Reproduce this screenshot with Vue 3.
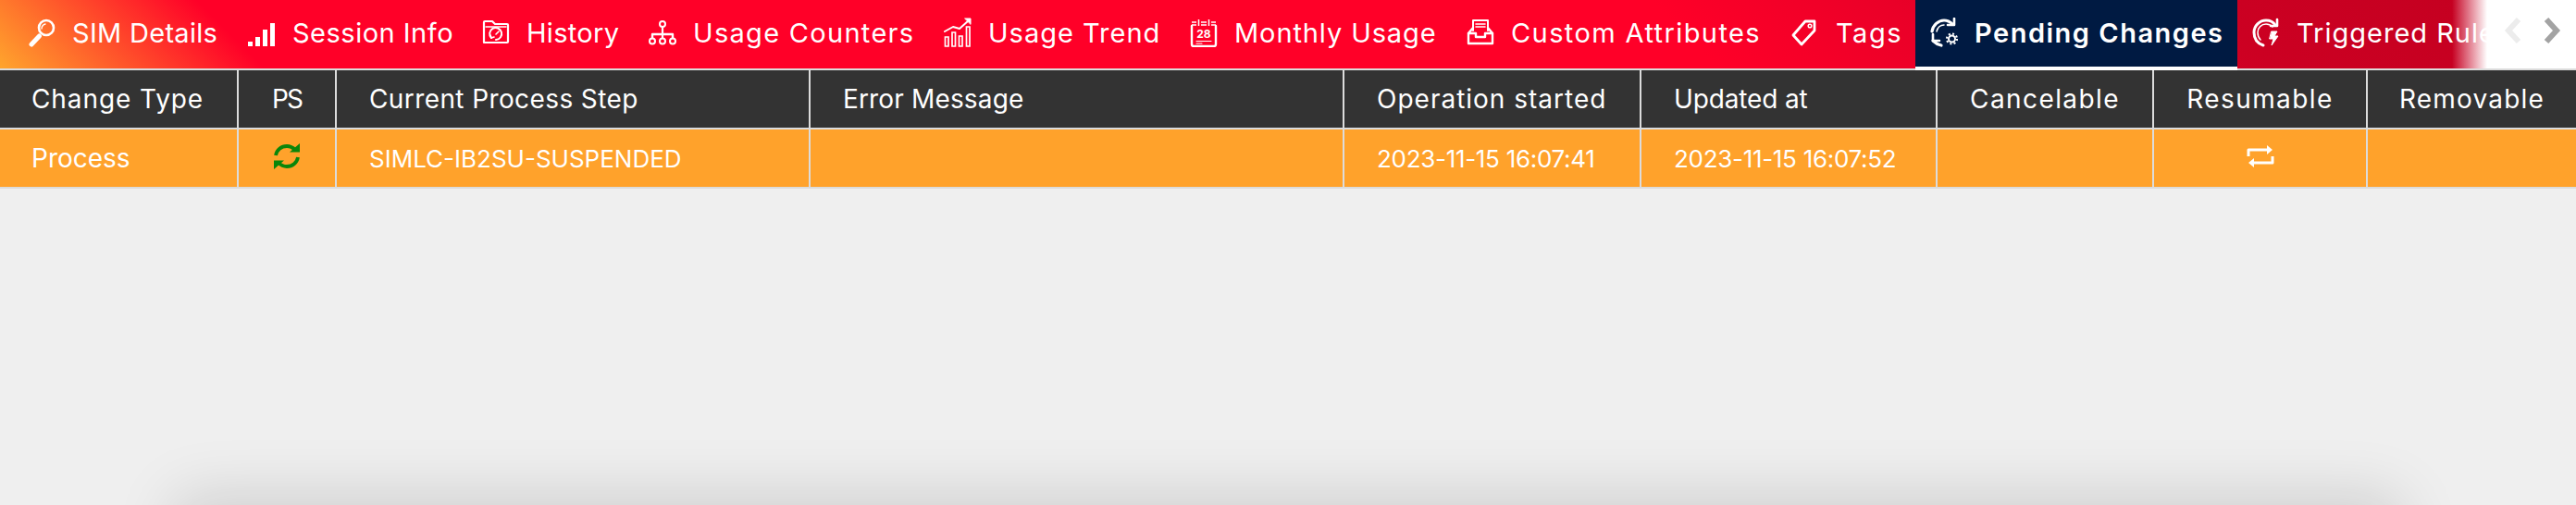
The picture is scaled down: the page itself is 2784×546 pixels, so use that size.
<script setup>
const tabs = [
  { label: 'SIM Details', icon: 'search', ls: 0.3 },
  { label: 'Session Info', icon: 'signal', ls: 0.5 },
  { label: 'History', icon: 'history', ls: 0.3 },
  { label: 'Usage Counters', icon: 'tree', ls: 1.3 },
  { label: 'Usage Trend', icon: 'trend', ls: 1 },
  { label: 'Monthly Usage', icon: 'calendar', ls: 0.9 },
  { label: 'Custom Attributes', icon: 'inbox', ls: 1.4 },
  { label: 'Tags', icon: 'tag', ls: 1.5 },
  { label: 'Pending Changes', icon: 'pending', active: true, ls: 1.5 },
  { label: 'Triggered Rules', icon: 'rules', ls: 1 }
]
const headers = [
  { label: 'Change Type', ls: 0.9 },
  { label: 'PS', ls: -2, center: true },
  { label: 'Current Process Step', ls: 0.4 },
  { label: 'Error Message', ls: 0.15 },
  { label: 'Operation started', ls: 1 },
  { label: 'Updated at', ls: -0.15 },
  { label: 'Cancelable', ls: 1.4, center: true },
  { label: 'Resumable', ls: 1.4, center: true },
  { label: 'Removable', ls: 1.2, center: true }
]
</script>

<template>
  <div class="page">
    <div class="tabbar">
      <nav class="tabs">
        <a v-for="t in tabs" :key="t.label" class="tab" :class="{ active: t.active }">
          <svg class="ico" viewBox="0 0 30 32" fill="none" stroke="#fff" stroke-width="2" stroke-linecap="round" stroke-linejoin="round">
            <template v-if="t.icon === 'search'">
              <circle cx="20" cy="11" r="8" stroke-width="2.6" />
              <path d="M15 12a5.500 5.500 0 0 1 4-5" stroke-width="1.4" />
              <path d="M12.500 20 4 29" stroke-width="5" />
            </template>
            <template v-else-if="t.icon === 'signal'">
              <g fill="#fff" stroke="none">
                <rect x="0" y="26" width="5" height="5" />
                <rect x="8" y="21" width="5" height="10" />
                <rect x="16" y="13" width="5" height="18" />
                <rect x="24" y="6" width="5" height="25" />
              </g>
            </template>
            <template v-else-if="t.icon === 'history'">
              <path d="M2 27V5a1 1 0 0 1 1-1h8l3 3h13a1 1 0 0 1 1 1v18a1 1 0 0 1-1 1z" stroke-width="2.2" />
              <path d="M4 10h22" stroke-width="1.4" />
              <path d="M10 22a6.500 6.500 0 1 1 5 2" stroke-width="2" />
              <path d="M15 18l3-3M9 19l1 3 3-1" stroke-width="1.6" />
            </template>
            <template v-else-if="t.icon === 'tree'">
              <circle cx="15" cy="7" r="3" />
              <path d="M15 10v12" stroke-width="2.2" />
              <path d="M4 22v-4h22v4" stroke-width="2.4" />
              <circle cx="4" cy="25.500" r="3" />
              <circle cx="15" cy="25.500" r="3" />
              <circle cx="26" cy="25.500" r="3" />
            </template>
            <template v-else-if="t.icon === 'trend'">
              <path d="M1 15 10 10l7 2L27 3" />
              <path d="M23 1h6v6z" fill="#fff" stroke-width="1" />
              <g stroke-width="1.7" stroke-linejoin="miter">
                <path d="M1.500 31V21h3.500v10z" />
                <path d="M9 31V16h3.500v15z" />
                <path d="M16.500 31V20H20v11z" />
                <path d="M24.500 31V10H28v21z" />
              </g>
            </template>
            <template v-else-if="t.icon === 'calendar'">
              <path d="M2 5h5M12 5h6M23 5h5M2 8h5M12 8h6M23 8h5M9.500 2v7M20.500 2v7" stroke-width="1.5" stroke-linecap="butt" />
              <path d="M2 9v20a2 2 0 0 0 2 2h22a2 2 0 0 0 2-2V9" stroke-width="2.400" />
              <text x="15" y="22" text-anchor="middle" class="cal">28</text>
              <path d="M7 25.500h16M7 28h6" stroke-width="1.100" />
            </template>
            <template v-else-if="t.icon === 'inbox'">
              <path d="M7 14V3h16v11" />
              <path d="M10 7h10M10 10h10" stroke-width="1.600" />
              <path d="M7 11 2 17v11h26V17l-5-6" stroke-width="2.400" />
              <path d="M2 17h8v4h10v-4h8" stroke-width="2.400" />
            </template>
            <template v-else-if="t.icon === 'tag'">
              <path d="M15 4h10v10L11 29 2 19z" stroke-width="2.800" />
              <circle cx="20" cy="9" r="1.800" stroke-width="1.500" />
            </template>
            <template v-else-if="t.icon === 'pending'">
              <path d="M2 15C3 8 9 3 15 3c3.500 0 6.500 1.500 9 4" stroke-width="3.200" />
              <path d="M7 15c1-4 4-7 8-7" stroke-width="1.500" />
              <path d="M26 1v7h-7" stroke-width="2.600" />
              <path d="M3 25c2.500 2.500 5 4 9 5" stroke-width="3.200" />
              <path d="M3 18v7h7" stroke-width="2.600" />
              <circle cx="23.500" cy="23" r="3.500" stroke-width="2" />
              <circle cx="23.500" cy="23" r="5.500" stroke-width="2.200" stroke-dasharray="2 2.300" stroke-linecap="butt" />
            </template>
            <template v-else>
              <path d="M12 30C6 28 2 23 2 16 2 9 8 3 15 3c4 0 8 2 10 5" stroke-width="3" />
              <path d="M9 24c-2-2-3-5-3-8 0-5 4-9 9-9 3 0 5 1 7 3" stroke-width="1.500" />
              <path d="M27 2v7h-7" stroke-width="2.600" />
              <path d="M21 15h6l-3 5h4l-7 10 2-7h-4z" fill="#fff" stroke-width="1" />
            </template>
          </svg>
          <span class="label" :style="{ letterSpacing: t.ls + 'px' }">{{ t.label }}</span>
        </a>
      </nav>
      <div class="arrows">
        <svg class="chev" viewBox="0 0 20 30" fill="none" stroke="#ececec" stroke-width="6"><path d="M16 3 5 15l11 12" /></svg>
        <svg class="chev" viewBox="0 0 20 30" fill="none" stroke="#a3a3a3" stroke-width="6"><path d="M4 3l11 12L4 27" /></svg>
      </div>
    </div>

    <div class="table">
      <div class="row head">
        <div v-for="h in headers" :key="h.label" class="cell" :class="{ center: h.center }" :style="{ letterSpacing: h.ls + 'px' }">{{ h.label }}</div>
      </div>
      <div class="row body">
        <div class="cell">Process</div>
        <div class="cell center">
          <svg class="ps" viewBox="0 0 30 30" fill="none" stroke="#0a860a">
            <path d="M3 14C4 8 9 4 15 4c4 0 7 2 9 4" stroke-width="3.800" />
            <path d="M27 16c-1 6-6 10-12 10-4 0-7-2-9-4" stroke-width="3.800" />
            <path d="M18 10.500h11V1zM12 19.500H1V29z" fill="#0a860a" stroke="none" />
          </svg>
        </div>
        <div class="cell step">SIMLC-IB2SU-SUSPENDED</div>
        <div class="cell"></div>
        <div class="cell date">2023-11-15 16:07:41</div>
        <div class="cell date">2023-11-15 16:07:52</div>
        <div class="cell"></div>
        <div class="cell center">
          <svg class="resume" viewBox="0 0 30 26" fill="none" stroke="#fff" stroke-width="3" stroke-linejoin="round">
            <path d="M2 13V6h21M28 13v7H7" />
            <path d="M22 1l6 5-6 5zM8 15l-6 5 6 5z" fill="#fff" stroke="none" />
          </svg>
        </div>
        <div class="cell"></div>
      </div>
    </div>

    <div class="glow"></div>
  </div>
</template>

<style scoped>
.page {
  position: relative;
  width: 2784px;
  height: 546px;
  overflow: hidden;
  background: #efefef;
  font-family: Inter, "Open Sans", sans-serif;
  color: #fff;
}
.tabbar {
  position: relative;
  height: 74px;
  background: linear-gradient(45deg, #ffa52d 0%, #ff0028 10%, #ff0028 65%, #ea0028 74%, #cc0022 86%, #c20020 100%);
}
.tabbar::after {
  content: "";
  position: absolute;
  top: 0;
  right: 0;
  bottom: 0;
  width: 134px;
  background: linear-gradient(90deg, rgba(255, 255, 255, 0) 0, #fff 38px);
}
.tabs {
  display: grid;
  grid-template-columns: 238px 253px 180px 319px 266px 299px 351px 150px 348px 260px;
  margin-left: 14px;
  height: 74px;
}
.tab {
  position: relative;
  display: flex;
  align-items: center;
  gap: 18px;
  padding: 0 0 0 16px;
  font-size: 29px;
  white-space: nowrap;
}
.label { margin-bottom: 4px; }
.tab.active {
  background: #001a42;
  font-weight: 600;
  height: 72px;
  padding-top: 2px;
  box-sizing: border-box;
}
.tab.active::after {
  content: "";
  position: absolute;
  left: 0;
  right: 0;
  top: 72px;
  height: 4px;
  background: #fff;
}
.ico { width: 30px; height: 32px; flex: none; margin-top: -4px; }
.cal { font: 700 12px Inter, sans-serif; fill: #fff; stroke: none; }
.arrows {
  position: absolute;
  z-index: 2;
  top: 18px;
  left: 2706px;
  display: flex;
  gap: 22px;
}
.chev { width: 20px; height: 30px; }
.table {
  border-top: 2px solid #dcdcdc;
  border-bottom: 2px solid #dcdcdc;
}
.row {
  display: grid;
  grid-template-columns: 256px 106px 512px 577px 321px 320px 234px 231px 227px;
  height: 62px;
}
.row.head { background: #333333; border-bottom: 2px solid #dcdcdc; }
.row.body { background: #ffa22b; }
.cell {
  display: flex;
  align-items: center;
  padding-left: 35px;
  border-left: 2px solid #dcdcdc;
  font-size: 28px;
  white-space: nowrap;
}
.cell:first-child { border-left: 0; padding-left: 34px; }
.cell.center { justify-content: center; padding-left: 0; }
.cell.step { font-size: 26px; }
.cell.date { font-size: 26px; letter-spacing: -0.3px; }
.ps { width: 30px; height: 30px; margin-bottom: 5px; }
.resume { width: 30px; height: 26px; margin-bottom: 4px; }
.glow {
  position: absolute;
  left: 190px;
  right: 190px;
  top: 620px;
  height: 200px;
  box-shadow: 0 -83px 67px rgba(0, 0, 0, 0.14);
}
</style>
